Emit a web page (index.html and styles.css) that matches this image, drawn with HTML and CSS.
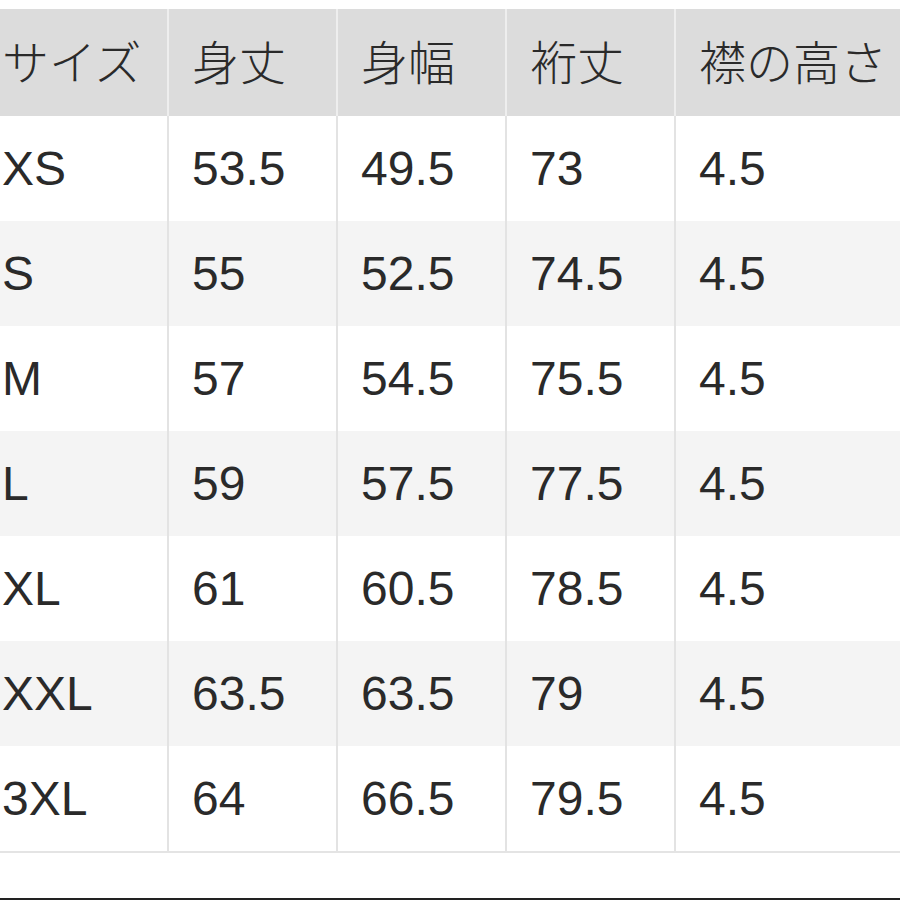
FILE: index.html
```html
<!DOCTYPE html>
<html lang="ja">
<head>
<meta charset="utf-8">
<title>サイズ表</title>
<link rel="stylesheet" href="styles.css">
</head>
<body>
<div class="page">
  <div class="table">
    <div class="row head">
      <div class="cell">サイズ</div>
      <div class="cell">身丈</div>
      <div class="cell">身幅</div>
      <div class="cell">裄丈</div>
      <div class="cell">襟の高さ</div>
    </div>
    <div class="row">
      <div class="cell">XS</div><div class="cell">53.5</div><div class="cell">49.5</div><div class="cell">73</div><div class="cell">4.5</div>
    </div>
    <div class="row alt">
      <div class="cell">S</div><div class="cell">55</div><div class="cell">52.5</div><div class="cell">74.5</div><div class="cell">4.5</div>
    </div>
    <div class="row">
      <div class="cell">M</div><div class="cell">57</div><div class="cell">54.5</div><div class="cell">75.5</div><div class="cell">4.5</div>
    </div>
    <div class="row alt">
      <div class="cell">L</div><div class="cell">59</div><div class="cell">57.5</div><div class="cell">77.5</div><div class="cell">4.5</div>
    </div>
    <div class="row">
      <div class="cell">XL</div><div class="cell">61</div><div class="cell">60.5</div><div class="cell">78.5</div><div class="cell">4.5</div>
    </div>
    <div class="row alt">
      <div class="cell">XXL</div><div class="cell">63.5</div><div class="cell">63.5</div><div class="cell">79</div><div class="cell">4.5</div>
    </div>
    <div class="row last">
      <div class="cell">3XL</div><div class="cell">64</div><div class="cell">66.5</div><div class="cell">79.5</div><div class="cell">4.5</div>
    </div>
  </div>
  <div class="spacer"></div>
  <div class="bottom-line"></div>
</div>
</body>
</html>
```

FILE: styles.css
```css
html, body {
  margin: 0;
  padding: 0;
  background: #ffffff;
}

.page {
  width: 900px;
  height: 900px;
  overflow: hidden;
  display: flex;
  flex-direction: column;
  padding-top: 9px;
  box-sizing: border-box;
}

.table {
  display: flex;
  flex-direction: column;
  font-family: "Liberation Sans", "Noto Sans CJK JP", sans-serif;
  font-size: 48px;
  color: #2a2a2a;
}

.row {
  display: grid;
  grid-template-columns: 167px 169px 169px 169px 1fr;
  height: 105px;
  background: #ffffff;
}

.row.alt {
  background: #f4f4f4;
}

.row.head {
  height: 107px;
  background: #dcdcdc;
}

.row.last {
  height: 107px;
  border-bottom: 2px solid #e4e4e4;
  box-sizing: border-box;
}

.cell {
  display: flex;
  align-items: center;
  padding-left: 23px;
  border-left: 2px solid #e3e3e3;
  white-space: nowrap;
  overflow: hidden;
}

.cell:first-child {
  padding-left: 2px;
  border-left: none;
}

.head .cell {
  border-left-color: #eeeeee;
  font-family: "Noto Sans CJK JP", sans-serif;
  font-size: 47px;
  font-weight: 300;
  padding-bottom: 6px;
  box-sizing: border-box;
}

.head .cell:first-child {
  padding-left: 2px;
}

.spacer {
  flex: 1;
}

.bottom-line {
  height: 2px;
  background: #222222;
}
```
